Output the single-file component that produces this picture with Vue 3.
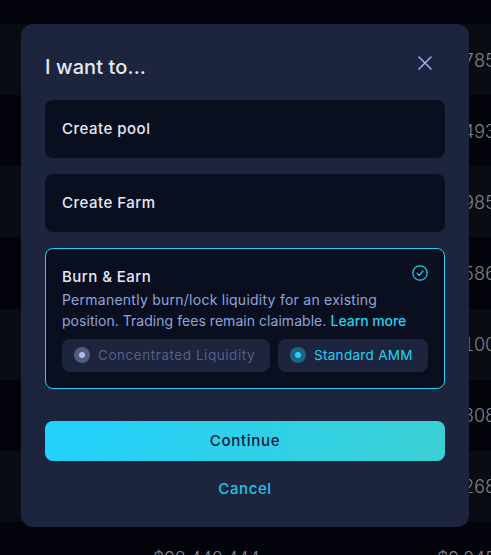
<script setup>
const rows = [
  { value: '$1,785', alt: true },
  { value: '$2,493', alt: false },
  { value: '$6,985', alt: true },
  { value: '$3,586', alt: false },
  { value: '$7,100', alt: true },
  { value: '$5,308', alt: false },
  { value: '$4,268', alt: true },
]
</script>

<template>
  <div class="page">
    <div class="table">
      <div class="spacer"></div>
      <div v-for="r in rows" :key="r.value" class="row" :class="{ alt: r.alt }">
        <span class="num">{{ r.value }}</span>
      </div>
      <div class="row last">
        <span class="big">$92,440,444</span>
        <span class="num">$9,045</span>
      </div>
    </div>

    <div class="modal">
      <div class="head">
        <h2>I want to...</h2>
        <svg class="close" width="14" height="14" viewBox="0 0 14 14" fill="none">
          <path d="M1 1l12 12M13 1L1 13" stroke="#9db2ea" stroke-width="1.5" stroke-linecap="round" />
        </svg>
      </div>

      <div class="options">
        <div class="card plain">Create pool</div>
        <div class="card plain">Create Farm</div>
        <div class="card active">
          <svg class="check" width="16" height="16" viewBox="0 0 16 16" fill="none">
            <circle cx="8" cy="8" r="7.2" stroke="#22d1f8" stroke-width="1.2" />
            <path d="M5 8.2l2.1 2.1L11 6" stroke="#22d1f8" stroke-width="1.2" stroke-linecap="round" stroke-linejoin="round" />
          </svg>
          <div class="card-title">Burn &amp; Earn</div>
          <p class="desc">Permanently burn/lock liquidity for an existing <span class="tight">position. Trading fees remain claimable.</span> <span class="link">Learn more</span></p>
          <div class="choices">
            <div class="choice off">
              <span class="radio"><i></i></span>
              <span>Concentrated Liquidity</span>
            </div>
            <div class="choice on">
              <span class="radio"><i></i></span>
              <span>Standard AMM</span>
            </div>
          </div>
        </div>
      </div>

      <button class="continue">Continue</button>
      <button class="cancel">Cancel</button>
    </div>
  </div>
</template>

<style>
html, body { margin: 0; background: #03040b; }
</style>

<style scoped>
.page {
  position: relative;
  width: 491px;
  height: 555px;
  overflow: hidden;
  background: #03040b;
  font-family: Inter, "Noto Sans", sans-serif;
}
.spacer { height: 24px; }
.row {
  position: relative;
  height: 71.14px;
  display: flex;
  align-items: center;
  padding: 1px 0 0 437px;
  box-sizing: border-box;
  white-space: nowrap;
}
.row.alt { background: #0a0c13; }
.num, .big {
  font-size: 18px;
  font-weight: 300;
  color: #82838a;
  letter-spacing: -0.7px;
  font-variant-numeric: tabular-nums;
}
.last { align-items: flex-start; padding-top: 26px; padding-left: 437px; }
.big { position: absolute; left: 153px; }
.modal {
  position: absolute;
  left: 21px;
  top: 24px;
  width: 448px;
  height: 503px;
  box-sizing: border-box;
  padding: 24px;
  background: #1d243d;
  border-radius: 12px;
  display: flex;
  flex-direction: column;
}
.head {
  display: flex;
  justify-content: space-between;
  align-items: flex-start;
  height: 52px;
}
h2 {
  margin: 7px 0 0;
  font-size: 20px;
  line-height: 24px;
  font-weight: 500;
  color: #e4e9f7;
  letter-spacing: 0.1px;
}
.close { margin: 8px 13px 0 0; }
.options {
  display: flex;
  flex-direction: column;
  gap: 16px;
}
.card {
  background: #0a0f20;
  border-radius: 8px;
  box-sizing: border-box;
}
.plain {
  height: 58px;
  padding: 0 17px 2px;
  display: flex;
  align-items: center;
  font-size: 15px;
  font-weight: 450;
  color: #e4e9f7;
  letter-spacing: 0.5px;
}
.active {
  position: relative;
  height: 141px;
  padding: 16px;
  border: 1px solid #22d1f8;
}
.check { position: absolute; right: 16px; top: 16px; }
.card-title {
  font-size: 15px;
  line-height: 24px;
  font-weight: 450;
  color: #e4e9f7;
  letter-spacing: 0.45px;
}
.desc {
  margin: 0;
  font-size: 14px;
  line-height: 21px;
  color: #8fa3dc;
  letter-spacing: 0.25px;
}
.tight { letter-spacing: 0.04px; }
.link { color: #22d1f8; font-weight: 500; letter-spacing: -0.05px; }
.choices {
  display: flex;
  gap: 8px;
  margin-top: 8px;
}
.choice {
  height: 33px;
  border-radius: 8px;
  background: #1d243d;
  display: flex;
  align-items: center;
  gap: 8px;
  padding: 0 12px 1px;
  box-sizing: border-box;
  font-size: 13.5px;
  white-space: nowrap;
}
.off { width: 208px; color: #565f80; letter-spacing: 0.55px; }
.on { width: 150px; color: #22d1f8; letter-spacing: 0.3px; }
.radio {
  width: 16px;
  height: 16px;
  border-radius: 50%;
  display: flex;
  align-items: center;
  justify-content: center;
  flex: none;
}
.radio i { width: 6px; height: 6px; border-radius: 50%; display: block; }
.off .radio { background: #535c80; }
.off .radio i { background: #a9bdf5; }
.on .radio { background: #1f6484; }
.on .radio i { background: #22d1f8; }
.continue, .cancel {
  border: 0;
  font-family: inherit;
  font-weight: 500;
  cursor: pointer;
}
.continue {
  margin-top: 32px;
  height: 40px;
  padding: 0 0 2px;
  border-radius: 8px;
  background: linear-gradient(90deg, #22d1fd, #3ad0d4);
  color: #13203a;
  font-size: 15px;
  letter-spacing: 0.7px;
}
.cancel {
  margin-top: 15px;
  height: 24px;
  padding: 0;
  background: none;
  color: #22c4ee;
  font-size: 15px;
  letter-spacing: 0.6px;
}
</style>
